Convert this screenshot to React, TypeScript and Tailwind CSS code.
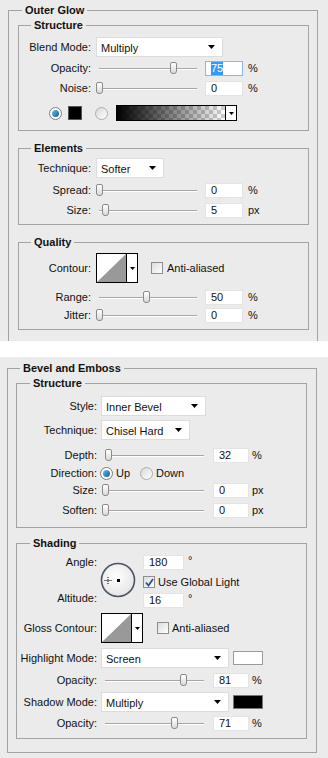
import React from "react";

const Arrow = () => (
  <svg width="7" height="4" viewBox="0 0 7 4">
    <polygon points="0,0 7,0 3.5,4" fill="#000" />
  </svg>
);

function Select({ value, w }: { value: string; w: string }) {
  return (
    <div className={`${w} h-[20px] bg-white border border-[#dcdcdc] flex items-center justify-between pl-[4px] pr-[7px]`}>
      <span className="pt-[2px]">{value}</span>
      <Arrow />
    </div>
  );
}

function Field({ v, w, active }: { v: string; w: string; active?: boolean }) {
  return (
    <div
      className={`${w} h-[15px] bg-white border flex items-center pl-[5px] leading-[13px] ${
        active ? "border-[#8fb4e6]" : "border-[#e4e4e4]"
      }`}
    >
      {active ? <span className="bg-[#3399ff] text-white">{v}</span> : v}
    </div>
  );
}

function Slider({ w, track, thumb }: { w: string; track: string; thumb: number }) {
  return (
    <div className={`relative h-[16px] ${w}`}>
      <div className={`absolute ${track} right-0 top-[8px] h-[1px] bg-[#a6a6a6]`} />
      <div className={`absolute ${track} right-0 top-[9px] h-[1px] bg-white`} />
      <div
        className="absolute top-[2px] w-[7px] h-[12px] rounded-t-[2px] rounded-b-[3px] border border-[#8a8a8a] bg-gradient-to-b from-white to-[#d9d9d9]"
        style={{ left: thumb }}
      />
    </div>
  );
}

function Radio({ on }: { on?: boolean }) {
  return (
    <span
      className={`w-[13px] h-[13px] rounded-full border flex items-center justify-center shrink-0 ${
        on ? "border-[#7c7c7c] bg-white" : "border-[#adadad] bg-gradient-to-br from-[#d8d8d8] to-white"
      }`}
    >
      {on && <span className="w-[7px] h-[7px] rounded-full bg-gradient-to-br from-[#5fc3f0] to-[#0c5f93]" />}
    </span>
  );
}

function Check({ on }: { on?: boolean }) {
  return (
    <span className="w-[12px] h-[12px] border border-[#8e8e8e] bg-gradient-to-br from-[#dcdcdc] to-white flex items-center justify-center shrink-0">
      {on && (
        <svg width="9" height="9" viewBox="0 0 9 9">
          <path d="M1 4.5 L3.5 7.5 L8 1" fill="none" stroke="#2c4f9e" strokeWidth="1.8" />
        </svg>
      )}
    </span>
  );
}

function Contour() {
  return (
    <div className="w-[42px] h-[30px] border border-black flex bg-white">
      <svg width="29" height="28" viewBox="0 0 29 28" className="shrink-0">
        <polygon points="0,28 29,0 29,28" fill="#999999" />
      </svg>
      <div className="flex-1 border-l border-black flex items-center justify-center">
        <svg width="5" height="3" viewBox="0 0 5 3">
          <polygon points="0,0 5,0 2.5,3" fill="#000" />
        </svg>
      </div>
    </div>
  );
}

function Gradient() {
  return (
    <div className="w-[121px] h-[16px] border border-black flex bg-white ml-[8px]">
      <svg width="108" height="14" className="shrink-0">
        <defs>
          <pattern id="chk" width="8" height="8" patternUnits="userSpaceOnUse">
            <rect width="8" height="8" fill="#fff" />
            <rect width="4" height="4" fill="#cfcfcf" />
            <rect x="4" y="4" width="4" height="4" fill="#cfcfcf" />
          </pattern>
          <linearGradient id="fade" x1="0" x2="1" y1="0" y2="0">
            <stop offset="0" stopColor="#000" stopOpacity="1" />
            <stop offset="1" stopColor="#000" stopOpacity="0" />
          </linearGradient>
        </defs>
        <rect width="108" height="14" fill="url(#chk)" />
        <rect width="108" height="14" fill="url(#fade)" />
      </svg>
      <div className="flex-1 border-l border-black flex items-center justify-center">
        <svg width="5" height="3" viewBox="0 0 5 3">
          <polygon points="0,0 5,0 2.5,3" fill="#000" />
        </svg>
      </div>
    </div>
  );
}

function AngleDial() {
  return (
    <svg width="36" height="36" viewBox="0 0 36 36" className="mt-[7px] ml-[3px] shrink-0">
      <defs>
        <radialGradient id="dial" cx="45%" cy="40%" r="65%">
          <stop offset="0" stopColor="#ffffff" />
          <stop offset="1" stopColor="#e3e3e3" />
        </radialGradient>
      </defs>
      <circle cx="18" cy="18" r="16.5" fill="url(#dial)" stroke="#4c5369" strokeWidth="1.6" />
      <rect x="17" y="17" width="3" height="3" fill="#000" />
      <path d="M4.5 18.5 H11.5 M8 15 V22" stroke="#000" strokeWidth="1" strokeDasharray="1 1" />
    </svg>
  );
}

// label column for the Outer Glow panel
const L1 = ({ t }: { t: string }) => <span className="w-[72px] text-right shrink-0">{t}</span>;
// label column for the Bevel panel
const L2 = ({ t }: { t: string }) => <span className="w-[80px] text-right shrink-0">{t}</span>;

function Row1({ label, thumb, v, unit, active, mt }: { label: string; thumb: number; v: string; unit: string; active?: boolean; mt: string }) {
  return (
    <div className={`flex items-center h-[16px] ${mt}`}>
      <L1 t={label} />
      <Slider w="w-[101px] ml-[5px]" track="left-[3px]" thumb={thumb} />
      <div className="ml-[8px]">
        <Field v={v} w="w-[38px]" active={active} />
      </div>
      <span className="ml-[5px]">{unit}</span>
    </div>
  );
}

function Row2({ label, thumb, v, unit, mt }: { label: string; thumb: number; v: string; unit: string; mt: string }) {
  return (
    <div className={`flex items-center h-[16px] ${mt}`}>
      <L2 t={label} />
      <Slider w="w-[103px] ml-[4px]" track="left-[4px]" thumb={thumb} />
      <div className="ml-[9px]">
        <Field v={v} w="w-[36px]" />
      </div>
      <span className="ml-[3px]">{unit}</span>
    </div>
  );
}

const legend = "font-bold leading-[14px] px-[3px]";

export default function App() {
  return (
    <div className="w-[328px] h-[758px] overflow-hidden text-[11px] leading-[14px] text-[#111] font-['Liberation_Sans',Arial,sans-serif]">
      {/* Outer Glow */}
      <div className="bg-[#ebebeb] h-[341px] pt-[3px] overflow-hidden">
        <fieldset className="ml-[8px] w-[310px] h-[345px] border border-b-0 border-[#a3a3a3]">
          <legend className={`${legend} ml-[13px]`}>Outer Glow</legend>

          <fieldset className="mt-[1px] ml-[9px] mr-[8px] border border-[#a3a3a3] pb-[8px]">
            <legend className={`${legend} ml-[12px]`}>Structure</legend>
            <div className="flex items-center mt-[5px]">
              <L1 t="Blend Mode:" />
              <div className="ml-[5px]">
                <Select value="Multiply" w="w-[127px]" />
              </div>
            </div>
            <Row1 label="Opacity:" thumb={74} v="75" unit="%" active mt="mt-[3px]" />
            <Row1 label="Noise:" thumb={0} v="0" unit="%" mt="mt-[4px]" />
            <div className="flex items-center h-[18px] mt-[8px]">
              <span className="ml-[30px]">
                <Radio on />
              </span>
              <span className="ml-[6px] w-[14px] h-[14px] bg-black border border-[#555]" />
              <span className="ml-[13px]">
                <Radio />
              </span>
              <Gradient />
            </div>
          </fieldset>

          <fieldset className="mt-[10px] ml-[9px] mr-[8px] border border-[#a3a3a3] pb-[6px]">
            <legend className={`${legend} ml-[12px]`}>Elements</legend>
            <div className="flex items-center mt-[3px]">
              <L1 t="Technique:" />
              <div className="ml-[5px]">
                <Select value="Softer" w="w-[68px]" />
              </div>
            </div>
            <Row1 label="Spread:" thumb={0} v="0" unit="%" mt="mt-[4px]" />
            <Row1 label="Size:" thumb={6} v="5" unit="px" mt="mt-[4px]" />
          </fieldset>

          <fieldset className="mt-[10px] ml-[9px] mr-[8px] border border-[#a3a3a3] pb-[6px]">
            <legend className={`${legend} ml-[12px]`}>Quality</legend>
            <div className="flex items-center mt-[4px]">
              <L1 t="Contour:" />
              <div className="ml-[5px]">
                <Contour />
              </div>
              <span className="ml-[13px]">
                <Check />
              </span>
              <span className="ml-[4px]">Anti-aliased</span>
            </div>
            <Row1 label="Range:" thumb={47} v="50" unit="%" mt="mt-[6px]" />
            <Row1 label="Jitter:" thumb={0} v="0" unit="%" mt="mt-[2px]" />
          </fieldset>
        </fieldset>
      </div>

      <div className="h-[16px] bg-white" />

      {/* Bevel and Emboss */}
      <div className="bg-[#ebebeb] h-[401px] pt-[4px]">
        <fieldset className="ml-[7px] w-[310px] border border-[#a3a3a3] pb-[13px]">
          <legend className={`${legend} ml-[12px]`}>Bevel and Emboss</legend>

          <fieldset className="mt-[1px] ml-[8px] mr-[9px] border border-[#a3a3a3] pb-[9px]">
            <legend className={`${legend} ml-[13px]`}>Structure</legend>
            <div className="flex items-center mt-[6px]">
              <L2 t="Style:" />
              <div className="ml-[4px]">
                <Select value="Inner Bevel" w="w-[105px]" />
              </div>
            </div>
            <div className="flex items-center mt-[4px]">
              <L2 t="Technique:" />
              <div className="ml-[4px]">
                <Select value="Chisel Hard" w="w-[89px]" />
              </div>
            </div>
            <Row2 label="Depth:" thumb={4} v="32" unit="%" mt="mt-[7px]" />
            <div className="flex items-center h-[16px] mt-[2px]">
              <L2 t="Direction:" />
              <span className="ml-[3px]">
                <Radio on />
              </span>
              <span className="ml-[3px]">Up</span>
              <span className="ml-[10px]">
                <Radio />
              </span>
              <span className="ml-[3px]">Down</span>
            </div>
            <Row2 label="Size:" thumb={1} v="0" unit="px" mt="mt-[1px]" />
            <Row2 label="Soften:" thumb={1} v="0" unit="px" mt="mt-[4px]" />
          </fieldset>

          <fieldset className="mt-[8px] ml-[8px] mr-[9px] border border-[#a3a3a3] pb-[7px]">
            <legend className={`${legend} ml-[13px]`}>Shading</legend>
            <div className="flex mt-[5px] h-[52px]">
              <div className="w-[80px] shrink-0 flex flex-col justify-between text-right">
                <span className="leading-[15px]">Angle:</span>
                <span className="leading-[15px] pb-[1px]">Altitude:</span>
              </div>
              <AngleDial />
              <div className="ml-[7px] flex flex-col">
                <div className="flex items-start">
                  <Field v="180" w="w-[41px]" />
                  <span className="ml-[4px] leading-[10px]">°</span>
                </div>
                <div className="flex items-center mt-[5px]">
                  <Check on />
                  <span className="ml-[3px]">Use Global Light</span>
                </div>
                <div className="flex items-start mt-[4px]">
                  <Field v="16" w="w-[41px]" />
                  <span className="ml-[4px] leading-[10px]">°</span>
                </div>
              </div>
            </div>
            <div className="flex items-center mt-[6px]">
              <L2 t="Gloss Contour:" />
              <div className="ml-[4px]">
                <Contour />
              </div>
              <span className="ml-[14px]">
                <Check />
              </span>
              <span className="ml-[3px]">Anti-aliased</span>
            </div>
            <div className="flex items-center mt-[5px]">
              <L2 t="Highlight Mode:" />
              <div className="ml-[4px]">
                <Select value="Screen" w="w-[128px]" />
              </div>
              <span className="ml-[4px] w-[30px] h-[14px] bg-white border border-[#9a9a9a]" />
            </div>
            <Row2 label="Opacity:" thumb={79} v="81" unit="%" mt="mt-[4px]" />
            <div className="flex items-center mt-[4px]">
              <L2 t="Shadow Mode:" />
              <div className="ml-[4px]">
                <Select value="Multiply" w="w-[128px]" />
              </div>
              <span className="ml-[4px] w-[30px] h-[14px] bg-black border border-[#777]" />
            </div>
            <Row2 label="Opacity:" thumb={70} v="71" unit="%" mt="mt-[3px]" />
          </fieldset>
        </fieldset>
      </div>
    </div>
  );
}
